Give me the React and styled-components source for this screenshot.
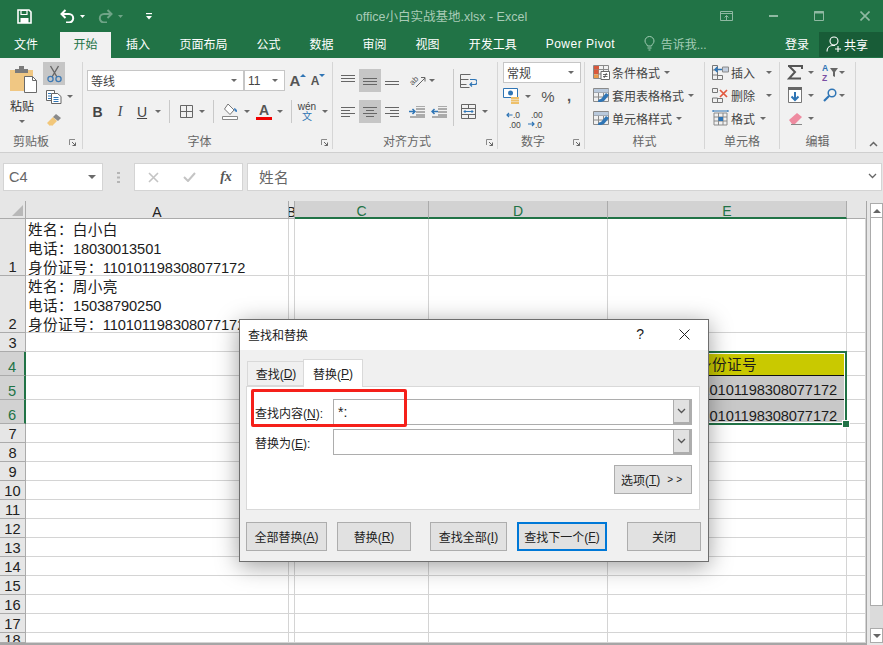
import React from "react";
import styled, { createGlobalStyle } from "styled-components";

const FONT = `"Liberation Sans", "Noto Sans CJK SC", sans-serif`;
const GREEN = "#217346";

const GlobalStyle = createGlobalStyle`
  html, body { margin: 0; padding: 0; background: #e6e6e6; }
  * { box-sizing: border-box; }
`;

const Page = styled.div`
  position: relative;
  width: 883px;
  height: 645px;
  overflow: hidden;
  display: flex;
  flex-direction: column;
  background: #e6e6e6;
  font-family: ${FONT};
  font-size: 12px;
  color: #444;
`;

/* ---------- title bar ---------- */
const TitleBar = styled.div`
  height: 32px;
  background: ${GREEN};
  display: grid;
  grid-template-columns: 1fr auto 1fr;
  align-items: center;
`;
const Qat = styled.div`
  display: flex;
  align-items: center;
  padding-left: 16px;
`;
const QatItem = styled.span`
  display: flex;
  justify-content: center;
  width: ${(p) => p.$w}px;
  margin-left: ${(p) => p.$ml || 0}px;
  opacity: ${(p) => p.$dim ? 0.35 : 1};
`;
const DocTitle = styled.div`
  color: #a9cbb7;
  font-size: 12.5px;
  padding-bottom: 1px;
`;
const WinButtons = styled.div`
  display: flex;
  justify-content: flex-end;
  align-items: center;
  padding-right: 13px;
  gap: 36px;
`;

/* ---------- tabs ---------- */
const TabBar = styled.div`
  height: 26px;
  background: ${GREEN};
  display: flex;
  align-items: stretch;
`;
const Tab = styled.div`
  padding: 0 ${(p) => p.$pad ?? 14.5}px 3px;
  margin-right: ${(p) => p.$mr || 0}px;
  display: flex;
  align-items: center;
  color: ${(p) => p.$active ? GREEN : "#fff"};
  background: ${(p) => p.$active ? "#f1f1f1" : "transparent"};
  letter-spacing: ${(p) => p.$wide ? "0.5px" : "0"};
  white-space: nowrap;
`;
const TellMe = styled.div`
  display: flex;
  align-items: center;
  gap: 6px;
  margin-left: 14px;
  color: #a4cdb6;
  padding-bottom: 3px;
`;
const TabSpacer = styled.div`flex: 1;`;
const SignIn = styled.div`
  color: #fff;
  display: flex;
  align-items: center;
  padding: 0 10px 3px 0;
`;
const Share = styled.div`
  width: 64px;
  height: 25px;
  background: #185c37;
  color: #fff;
  display: flex;
  align-items: center;
  padding-left: 7px;
  gap: 2px;
`;

/* ---------- ribbon ---------- */
const Ribbon = styled.div`
  height: 95px;
  background: #f1f1f1;
  border-bottom: 1px solid #cfcfcf;
  padding: 4px 0 3px;
  display: flex;
  position: relative;
`;
const Group = styled.div`
  width: ${(p) => p.$w}px;
  border-right: 1px solid #d6d6d6;
  display: flex;
  flex-direction: column;
`;
const GroupBody = styled.div`
  flex: 1;
  display: flex;
  flex-direction: ${(p) => p.$col ? "column" : "row"};
  gap: ${(p) => p.$gap || 0}px;
  padding: ${(p) => p.$top || 0}px 0 0 ${(p) => p.$left || 0}px;
  min-height: 0;
`;
const GroupFooter = styled.div`
  height: 14px;
  display: flex;
  align-items: center;
`;
const GroupLabel = styled.div`
  flex: 1;
  text-align: center;
  color: #666;
  line-height: 14px;
`;
const LauncherBox = styled.div`
  width: ${(p) => p.$w || 16}px;
  display: flex;
  justify-content: center;
`;
const Row = styled.div`
  display: flex;
  align-items: center;
  height: ${(p) => p.$h || 23}px;
  margin-left: ${(p) => p.$ml || 0}px;
  margin-top: ${(p) => p.$mt || 0}px;
`;
const Tool = styled.div`
  width: ${(p) => p.$w || 22}px;
  height: ${(p) => p.$h || 23}px;
  margin-left: ${(p) => p.$ml || 0}px;
  display: flex;
  align-items: center;
  justify-content: center;
  flex: none;
  background: ${(p) => p.$on ? "#c6c6c6" : "transparent"};
`;
const Caret = styled.span`
  display: inline-block;
  width: 0;
  height: 0;
  flex: none;
  border-left: 3px solid transparent;
  border-right: 3px solid transparent;
  border-top: 3px solid #6a6a6a;
  margin-left: ${(p) => p.$ml || 0}px;
`;
const BigCaret = styled(Caret)`
  border-left-width: 4px;
  border-right-width: 4px;
  border-top-width: 4px;
`;
const SizeCaret = styled(Caret)`
  border-top-color: #2f75b5;
  margin-bottom: 10px;
  transform: ${(p) => p.$up ? "rotate(180deg)" : "none"};
`;
const CaretBox = styled.div`
  width: ${(p) => p.$w || 10}px;
  margin-left: ${(p) => p.$ml || 0}px;
  display: flex;
  justify-content: center;
  flex: none;
`;
const Sep = styled.div`
  width: 1px;
  height: ${(p) => p.$h || 23}px;
  background: #c9c9c9;
  margin: 0 ${(p) => p.$m ?? 6}px;
  flex: none;
`;
const Combo = styled.div`
  width: ${(p) => p.$w}px;
  height: 21px;
  background: #fff;
  border: 1px solid #c6c6c6;
  display: flex;
  align-items: center;
  justify-content: space-between;
  padding: 0 6px 0 3px;
  color: #444;
  flex: none;
`;
const FormatLetter = styled.span`
  font-size: 14px;
  color: #444;
  font-weight: ${(p) => p.$bold ? 700 : 400};
  font-style: ${(p) => p.$italic ? "italic" : "normal"};
  font-family: ${(p) => p.$italic ? `"Liberation Serif", serif` : FONT};
  text-decoration: ${(p) => p.$under ? "underline" : "none"};
`;
const ColorA = styled.span`
  width: 16px;
  display: flex;
  justify-content: center;
  font-size: 14px;
  font-weight: 700;
  line-height: 14px;
  color: #555;
  border-bottom: 3px solid #f00000;
`;
const WenBox = styled.span`
  display: flex;
  flex-direction: column;
  align-items: center;
  line-height: 10px;
  font-size: 10px;
  color: #444;
`;
const WenChar = styled.span`
  color: #2f75b5;
  font-size: 10px;
`;
const SizeA = styled.span`
  display: flex;
  align-items: flex-start;
  font-size: ${(p) => p.$s}px;
  font-weight: 700;
  color: #555;
  line-height: 16px;
`;
const ListItem = styled.div`
  display: flex;
  align-items: center;
  height: 20px;
  color: #444;
  gap: 1px;
`;
const ItemIcon = styled.span`
  width: 19px;
  display: flex;
  justify-content: center;
  flex: none;
`;
const PasteColumn = styled.div`
  width: 43px;
  display: flex;
  flex-direction: column;
  align-items: flex-start;
  padding: 3px 0 0 10px;
`;
const PasteLabel = styled.div`
  margin-top: 4px;
  width: 24px;
  text-align: center;
  font-size: 12px;
  line-height: 18px;
  color: #333;
`;
const PasteCaret = styled.div`
  width: 24px;
  margin-top: 4px;
  display: flex;
  justify-content: center;
`;
const Percent = styled.span`
  font-size: 15px;
  color: #555;
`;
const Comma = styled.span`
  font-size: 15px;
  font-weight: 700;
  color: #555;
  line-height: 10px;
`;
const CollapseBox = styled.div`
  position: absolute;
  right: 5px;
  bottom: 5px;
  display: flex;
`;

/* ---------- formula bar ---------- */
const FormulaRow = styled.div`
  height: 48px;
  padding: 10px 1px 10px 3px;
  display: flex;
  flex: none;
`;
const NameBox = styled.div`
  width: 100px;
  background: #fff;
  border: 1px solid #d4d4d4;
  display: flex;
  align-items: center;
  justify-content: space-between;
  padding: 0 6px 0 5px;
  font-size: 14.5px;
  color: #666;
`;
const Dots = styled.div`
  width: 31px;
  display: flex;
  justify-content: center;
  align-items: center;
`;
const FuncBox = styled.div`
  width: 109px;
  background: #fff;
  border: 1px solid #d4d4d4;
  margin-right: 4px;
  display: grid;
  grid-template-columns: 36px 37px 36px;
  align-items: center;
  justify-items: center;
`;
const FxText = styled.span`
  font-family: "Liberation Serif", serif;
  font-style: italic;
  font-size: 14px;
  font-weight: 700;
  color: #555;
`;
const FormulaInput = styled.div`
  flex: 1;
  background: #fff;
  border: 1px solid #d4d4d4;
  display: flex;
  align-items: center;
  justify-content: space-between;
  padding: 0 4px 2px 11px;
  font-size: 14.67px;
  color: #666;
  letter-spacing: 0.3px;
`;

/* ---------- sheet ---------- */
const Sheet = styled.div`
  flex: 1;
  display: flex;
  min-height: 0;
  align-items: flex-start;
`;
const Grid = styled.div`
  display: grid;
  grid-template-columns: 26px 263px 6px 134px 179px 239px 19px;
  grid-template-rows: ${(p) => p.$rows};
  border-bottom: 2px solid #a6a6a6;
  border-right: 1px solid #a6a6a6;
  background: #fff;
  font-size: 14.67px;
  color: #1c1c1c;
`;
const Corner = styled.div`
  background: #e6e6e6;
  border-right: 1px solid #ababab;
  border-bottom: 1px solid #ababab;
  display: flex;
  align-items: flex-end;
  justify-content: flex-end;
  padding: 0 2px 2px 0;
`;
const CornerMark = styled.span`
  width: 0;
  height: 0;
  border-left: 11px solid transparent;
  border-bottom: 11px solid #b8b8b8;
`;
const ColHead = styled.div`
  background: ${(p) => p.$sel ? "#d2d2d2" : "#e6e6e6"};
  border-right: 1px solid ${(p) => p.$last ? "#e6e6e6" : "#ababab"};
  border-bottom: ${(p) => p.$sel ? `2px solid ${GREEN}` : "1px solid #ababab"};
  color: ${(p) => p.$sel ? GREEN : "#222"};
  display: flex;
  align-items: flex-end;
  justify-content: center;
  line-height: 12px;
  font-size: 14px;
  overflow: hidden;
`;
const RowHead = styled.div`
  background: ${(p) => p.$sel ? "#d2d2d2" : "#e6e6e6"};
  border-right: ${(p) => p.$sel ? `2px solid ${GREEN}` : "1px solid #ababab"};
  border-bottom: 1px solid #ababab;
  color: ${(p) => p.$sel ? GREEN : "#222"};
  display: flex;
  align-items: ${(p) => p.$clipped ? "flex-start" : "flex-end"};
  justify-content: center;
  line-height: 15px;
  overflow: hidden;
`;
const Cell = styled.div`
  background: ${(p) => p.$bg || "#fff"};
  border-right: 1px solid #d4d4d4;
  border-bottom: 1px solid ${(p) => p.$line || "#d4d4d4"};
  display: flex;
  flex-direction: column;
  justify-content: flex-end;
  align-items: ${(p) => p.$align || "flex-start"};
  padding: ${(p) => p.$pad || "0 0 0 2px"};
  line-height: 19px;
  white-space: nowrap;
  min-width: 0;
`;
const CellText = styled.div`
  letter-spacing: 0.3px;
  transform: translateY(${(p) => p.$dy || 0}px);
`;
const Num = styled.span`
  letter-spacing: -0.12px;
`;
const Selection = styled.div`
  position: absolute;
  left: 607px;
  top: 351px;
  width: 240px;
  height: 74px;
  border: 2px solid ${GREEN};
  box-shadow: inset 0 0 0 1px #fff;
  pointer-events: none;
`;
const Handle = styled.div`
  position: absolute;
  right: -4px;
  bottom: -4px;
  width: 6px;
  height: 6px;
  background: ${GREEN};
  outline: 1px solid #fff;
`;
const ScrollBar = styled.div`
  width: 13px;
  height: 440px;
  margin: 2px 0 0 3px;
  display: flex;
  flex-direction: column;
`;
const ScrollBtn = styled.div`
  height: 15px;
  background: #fff;
  border: 1px solid #ababab;
  display: flex;
  align-items: center;
  justify-content: center;
  flex: none;
`;
const ScrollThumb = styled.div`
  height: 388px;
  background: #fff;
  border: 1px solid #ababab;
  border-top: 0;
  flex: none;
`;
const ScrollTrack = styled.div`
  flex: 1;
  background: #dbdbdb;
`;
const TriUp = styled.span`
  width: 0;
  height: 0;
  border-left: 4px solid transparent;
  border-right: 4px solid transparent;
  border-bottom: 4px solid #666;
`;
const TriDown = styled(TriUp)`
  border-bottom: 0;
  border-top: 4px solid #666;
`;

/* ---------- dialog ---------- */
const Dialog = styled.div`
  position: absolute;
  left: 239px;
  top: 319px;
  width: 470px;
  height: 243px;
  background: #f0f0f0;
  border: 1px solid #6e6e6e;
  box-shadow: 0 4px 22px rgba(0, 0, 0, 0.38);
  color: #222;
  font-size: 12px;
`;
const DialogTitle = styled.div`
  height: 30px;
  background: #fff;
  display: flex;
  align-items: center;
  justify-content: space-between;
  padding: 0 18px 2px 8px;
  color: #1a1a1a;
`;
const DialogActions = styled.div`
  display: flex;
  align-items: center;
  gap: 35px;
  font-size: 14px;
`;
const DialogTabs = styled.div`
  display: flex;
  align-items: flex-end;
  height: 36px;
  margin-left: 7px;
  position: relative;
  z-index: 1;
`;
const DialogTab = styled.div`
  width: ${(p) => p.$w}px;
  height: ${(p) => p.$active ? 28 : 25}px;
  background: ${(p) => p.$active ? "#fff" : "#f0f0f0"};
  border: 1px solid #d9d9d9;
  border-bottom: ${(p) => p.$active ? "0" : "1px solid #d9d9d9"};
  border-right: ${(p) => p.$active ? "1px solid #d9d9d9" : "0"};
  display: flex;
  align-items: center;
  justify-content: center;
  padding-left: ${(p) => p.$active ? 0 : 1}px;
  margin-top: auto;
  margin-bottom: ${(p) => p.$active ? "-1px" : "0"};
`;
const Panel = styled.div`
  position: relative;
  width: 454px;
  height: 124px;
  margin: 0 0 0 6px;
  background: #fff;
  border: 1px solid #d9d9d9;
  padding: 12px 7px 0 8px;
`;
const FieldRow = styled.div`
  display: flex;
  align-items: center;
  height: 26px;
  margin-bottom: 4px;
`;
const FieldLabel = styled.div`
  width: 78px;
  flex: none;
`;
const FieldInput = styled.div`
  flex: 1;
  height: 26px;
  border: 1px solid #adadad;
  background: #fff;
  display: flex;
  align-items: center;
  justify-content: space-between;
  padding-left: 4px;
  font-size: 14px;
  color: #222;
`;
const FieldDrop = styled.div`
  width: 18px;
  height: 24px;
  background: #e1e1e1;
  border: 1px solid #adadad;
  border-width: 0 2px 2px 1px;
  display: flex;
  align-items: center;
  justify-content: center;
`;
const OptionsRow = styled.div`
  display: flex;
  justify-content: flex-end;
  margin: 10px 0 0 0;
`;
const DialogButton = styled.div`
  width: ${(p) => p.$w}px;
  height: ${(p) => p.$h || 29}px;
  margin-left: ${(p) => p.$ml || 0}px;
  background: #e1e1e1;
  border: ${(p) => p.$primary ? "2px solid #0078d7" : "1px solid #adadad"};
  display: flex;
  align-items: center;
  justify-content: center;
  flex: none;
  color: #222;
  white-space: nowrap;
`;
const ButtonRow = styled.div`
  display: flex;
  padding: 12px 0 0 6px;
`;
const Mn = styled.span`
  text-decoration: underline;
`;
const RedMark = styled.div`
  position: absolute;
  left: 11px;
  top: 69px;
  width: 156px;
  height: 38px;
  border: 3px solid #f5201a;
  border-radius: 2px;
  pointer-events: none;
`;
const MoreArrows = styled.span`
  margin-left: 7px;
  letter-spacing: 3px;
  font-size: 10px;
`;

/* ---------- icons ---------- */
const Svg = ({ w, h = w, children }) => (
  <svg width={w} height={h} viewBox={`0 0 ${w} ${h}`} fill="none" style={{ display: "block", flex: "none" }}>
    {children}
  </svg>
);

const SaveIcon = () => (
  <Svg w={15} h={15}>
    <path d="M1 1h11l2 2v11H1z" stroke="#fff" strokeWidth="1.6" />
    <path d="M4 1.5h6v4H4z" stroke="#fff" strokeWidth="1.2" />
    <path d="M3.5 9h8v5h-8z" fill="#fff" />
  </Svg>
);
const UndoIcon = ({ flip }) => (
  <Svg w={15} h={14}>
    <g transform={flip ? "translate(15 0) scale(-1 1)" : undefined}>
      <path d="M2 5h7a4.2 4.2 0 0 1 0 8.4H6" stroke="#fff" strokeWidth="2" />
      <path d="M5.5 1 1.5 5l4 4" stroke="#fff" strokeWidth="2" />
    </g>
  </Svg>
);
const WhiteCaret = () => (
  <Svg w={5} h={3}><path d="M0 0h5L2.5 3z" fill="#fff" /></Svg>
);
const QatMore = () => (
  <Svg w={6} h={7}>
    <path d="M0 0h6v1.2H0z" fill="#fff" />
    <path d="M0 3h6L3 6.5z" fill="#fff" />
  </Svg>
);
const DisplayIcon = () => (
  <Svg w={13} h={10}>
    <path d="M.5.5h12v9H.5z" stroke="#8fb9a2" />
    <path d="M.5 2.5h12" stroke="#8fb9a2" />
    <path d="M6.5 9V4.5M4.5 6.5l2-2 2 2" stroke="#8fb9a2" />
  </Svg>
);
const MinIcon = () => <Svg w={9} h={3}><path d="M0 1h9" stroke="#8fb9a2" strokeWidth="2" /></Svg>;
const MaxIcon = () => (
  <Svg w={10} h={10}>
    <path d="M.5.5h9v9h-9z" stroke="#8fb9a2" />
    <path d="M0 1.5h10" stroke="#8fb9a2" strokeWidth="2" />
  </Svg>
);
const CloseIcon = () => <Svg w={10} h={10}><path d="m.5.5 9 9m0-9-9 9" stroke="#8fb9a2" strokeWidth="1.6" /></Svg>;
const BulbIcon = () => (
  <Svg w={11} h={15}>
    <path d="M3.5 10C3 8 1 7.5 1 5a4.5 4.5 0 0 1 9 0c0 2.5-2 3-2.5 5z" stroke="#a4cdb6" />
    <path d="M3.5 12h4M4.5 14h2" stroke="#a4cdb6" />
  </Svg>
);
const ShareIcon = () => (
  <Svg w={16} h={17}>
    <circle cx="8" cy="5" r="4" stroke="#fff" strokeWidth="1.1" />
    <path d="M1 15.5c0-3.5 2.5-6 6-6h2" stroke="#fff" strokeWidth="1.1" />
    <path d="M12 10v6M9 13h6" stroke="#fff" strokeWidth="1.1" />
  </Svg>
);

const PasteIcon = () => (
  <Svg w={28} h={29}>
    <path d="M0 5h23v21H0z" fill="#f0c783" />
    <path d="M5 4h13v4H5z" fill="#7b7b7b" />
    <path d="M9 1h5v4H9z" fill="#7b7b7b" />
    <path d="M14.5 11.5h8l4 4v12h-12z" fill="#fff" stroke="#6a6a6a" />
    <path d="M22.5 11.5v4h4" stroke="#6a6a6a" />
  </Svg>
);
const CutIcon = () => (
  <Svg w={15} h={18}>
    <path d="M11.5 1 5 12M3.5 1 10 12" stroke="#666" strokeWidth="1.4" />
    <circle cx="3.5" cy="14" r="2.6" stroke="#3d79b4" strokeWidth="1.3" />
    <circle cx="11.5" cy="14" r="2.6" stroke="#3d79b4" strokeWidth="1.3" />
  </Svg>
);
const CopyIcon = () => (
  <Svg w={16} h={14}>
    <path d="M.5.5h8v3h3v7H.5z" fill="#fff" stroke="#666" />
    <path d="M5.5 3.5h6l3.5 3v7H5.5z" fill="#fff" stroke="#666" />
    <path d="M2 3.5h3M2 6h3M2 8.5h3M7.5 7.5h5M7.5 9.5h5M7.5 11.5h5" stroke="#2f75b5" />
  </Svg>
);
const PainterIcon = () => (
  <Svg w={17} h={14}>
    <path d="m1 10 6-6 4 4-5 5-1-1-1 1z" fill="#f2c77a" />
    <path d="m7 4 3-3 5 4-3 3z" fill="#8a8a8a" />
  </Svg>
);
const Launcher = () => (
  <Svg w={7} h={7}>
    <path d="M.5 6V.5H6" stroke="#8a8a8a" />
    <path d="M3 3l3.5 3.5M6.5 3.5v3h-3" stroke="#666" />
  </Svg>
);
const BorderIcon = () => (
  <Svg w={13} h={13}>
    <path d="M.5.5h12v12H.5zM6.5.5v12M.5 6.5h12" stroke="#666" />
  </Svg>
);
const FillIcon = () => (
  <Svg w={17} h={17}>
    <path d="m6 1 6 6-4 4.5L2.5 6z" fill="#fff" stroke="#777" />
    <path d="M12 5c2 .5 3.5 2 3 4-1.5 0-3-1-3-4z" fill="#3f80c0" />
    <path d="M.5 13.5h15v3H.5z" fill="#fff" stroke="#888" />
  </Svg>
);
const Lines = ({ rows, w = 14, h = 12 }) => (
  <Svg w={w} h={h}>
    {rows.map(([x1, x2, y, c], i) => (
      <path key={i} d={`M${x1} ${y}.5H${x2}`} stroke={c || "#666"} />
    ))}
  </Svg>
);
const lns = (off) => [[0, 14, off], [0, 14, off + 3], [0, 14, off + 6]];
const OrientIcon = () => (
  <Svg w={17} h={16}>
    <text x="0" y="10" fontSize="8" fill="#555" fontFamily="Liberation Sans" transform="rotate(-45 5 7)">ab</text>
    <path d="m7 14 9-9M12 4.5h4v4" stroke="#666" />
  </Svg>
);
const IndentIcon = ({ flip }) => (
  <Svg w={16} h={12}>
    <path d="M7 .5h9M7 3.5h9M7 6.5h9M7 9.5h9M1 11.5h15" stroke="#666" transform="translate(0 -.5)" />
    <g transform={flip ? "" : "translate(7 0) scale(-1 1)"}>
      <path d="M7 5.5H1M3.5 3 1 5.5 3.5 8" stroke="#2f75b5" strokeWidth="1.5" />
    </g>
  </Svg>
);
const WrapIcon = () => (
  <Svg w={17} h={16}>
    <path d="M.5 1.5h10M.5 6.5h8M.5 11.5h6" stroke="#666" />
    <path d="M.5 1.5v13h9" stroke="#666" />
    <path d="M10 6.5h4.5a2 2 0 0 1 0 5H10M12 9.5l-2 2 2 2" stroke="#2f75b5" strokeWidth="1.2" />
  </Svg>
);
const MergeIcon = () => (
  <Svg w={15} h={15}>
    <path d="M.5.5h14v14H.5zM.5 4.5h14M.5 10.5h14M7.5.5v4M7.5 10.5v4" stroke="#666" />
    <path d="M3 7.5h9M4.5 6 3 7.5 4.5 9M10.5 6 12 7.5 10.5 9" stroke="#2f75b5" />
  </Svg>
);
const CurrencyIcon = () => (
  <Svg w={17} h={16}>
    <path d="M.5.5h14v9H.5z" fill="#fff" stroke="#2f75b5" />
    <circle cx="7.5" cy="5" r="2.5" fill="#2f75b5" />
    <path d="M8 9h8v2H8zM8 11.5h8v2H8zM8 14h8v2H8z" fill="#eec06a" />
  </Svg>
);
const DecreaseIcon = () => (
  <Svg w={16} h={19}>
    <path d="M6.5 5H1M3 3 1 5l2 2" stroke="#2f75b5" strokeWidth="1.2" />
    <text x="7" y="8" fontSize="8.5" fill="#444" fontFamily="Liberation Sans">.0</text>
    <text x="3" y="17.5" fontSize="8.5" fill="#444" fontFamily="Liberation Sans">.00</text>
  </Svg>
);
const IncreaseIcon = () => (
  <Svg w={16} h={19}>
    <text x="3" y="8" fontSize="8.5" fill="#444" fontFamily="Liberation Sans">.00</text>
    <path d="M0 14h6M4 12l2 2-2 2" stroke="#2f75b5" strokeWidth="1.2" />
    <text x="7" y="17.5" fontSize="8.5" fill="#444" fontFamily="Liberation Sans">.0</text>
  </Svg>
);
const TableBase = ({ children }) => (
  <Svg w={17} h={15}>
    <path d="M.5.5h15v13H.5zM.5 4.5h15M.5 9h15M5.5.5v13M10.5.5v13" stroke="#8a8a8a" />
    {children}
  </Svg>
);
const CondIcon = () => (
  <TableBase>
    <path d="M1 1h5v3.5H1z" fill="#d9583b" />
    <path d="M1 5h4.5v4H1z" fill="#d9583b" />
    <path d="M1 9.5h4.5V13H1z" fill="#ed9b4b" />
    <path d="M8 6.5h8.500v8H8z" fill="#fff" stroke="#666" />
    <path d="M10 9.5h4.5M10 11.5h4.5M13.5 8 11 13" stroke="#444" strokeWidth=".8" />
  </TableBase>
);
const BrushTableIcon = () => (
  <TableBase>
    <path d="M1 1h14.5v3.5H1z" fill="#b9c9dc" />
    <path d="M5 14c0-2 1-3 3-3l5-6 3 2-5 6c-2 1-4 1-6 1z" fill="#2f75b5" />
  </TableBase>
);
const InsertIcon = () => (
  <Svg w={17} h={15}>
    <path d="M.5.5h5v14h-5zM.5 5h5M.5 10h5M5.5 10.5h5v4h-5z" stroke="#777" />
    <path d="M10.5 2h6v5h-6z" fill="#c3cede" stroke="#8a8a8a" />
    <path d="M10 4.5H3M5.5 2 3 4.5 5.5 7" stroke="#2f75b5" strokeWidth="1.5" />
  </Svg>
);
const DeleteIcon = () => (
  <Svg w={17} h={15}>
    <path d="M.5.5h5v4h-5zM.5 10h5v4.500h-5zM5.5 10.5h5v4h-5z" stroke="#777" />
    <path d="m8 2 7 7m0-7-7 7" stroke="#e2583e" strokeWidth="1.7" />
  </Svg>
);
const FormatIcon = () => (
  <Svg w={17} h={16}>
    <path d="M2 3h13v12H2zM2 7h13M2 11h13M6.5 3v12M11 3v12" stroke="#8a8a8a" />
    <path d="M6.5 7H11v4H6.5z" fill="#2f75b5" />
    <path d="M1 1h15M1 0v2M16 0v2" stroke="#2f75b5" />
  </Svg>
);
const SigmaIcon = () => (
  <Svg w={16} h={15}>
    <path d="M1 1h14v3M14 13.5H2l6-6.5-6-6" stroke="#555" strokeWidth="2" />
  </Svg>
);
const SortIcon = () => (
  <Svg w={16} h={20}>
    <text x="0" y="9" fontSize="8.5" fontWeight="700" fill="#2f75b5" fontFamily="Liberation Sans">A</text>
    <text x="0" y="18.5" fontSize="8.5" fontWeight="700" fill="#7a4fa3" fontFamily="Liberation Sans">Z</text>
    <path d="M8 6h8l-3 4v5l-2-1v-4z" fill="#666" />
  </Svg>
);
const FillDownIcon = () => (
  <Svg w={14} h={16}>
    <path d="M.5.5h13v15H.5z" fill="#fff" stroke="#777" />
    <path d="M0 0h14v3H0z" fill="#666" />
    <path d="M7 5v8M3.5 9.5 7 13l3.5-3.5" stroke="#2f75b5" strokeWidth="2" />
  </Svg>
);
const FindIcon = () => (
  <Svg w={14} h={14}>
    <circle cx="9" cy="5" r="3.8" stroke="#2f75b5" strokeWidth="1.5" />
    <path d="M6 8 1 13" stroke="#2f75b5" strokeWidth="2.2" />
  </Svg>
);
const EraserIcon = () => (
  <Svg w={15} h={14}>
    <path d="m1 9 8-7 5 4-7 7H4z" fill="#ee8ba0" />
    <path d="M3 13.5h11" stroke="#888" />
  </Svg>
);
const ChevronUp = () => <Svg w={9} h={6}><path d="m1 5 3.5-3.5L8 5" stroke="#666" strokeWidth="1.5" /></Svg>;
const ChevronDown = ({ c = "#666", w = 9 }) => <Svg w={w} h={6}><path d={`m1 1 ${(w - 2) / 2} 3.5L${w - 1} 1`} stroke={c} strokeWidth="1.3" /></Svg>;
const DotsIcon = () => (
  <Svg w={3} h={11}>
    <path d="M0 0h3v2H0zM0 4.5h3v2H0zM0 9h3v2H0z" fill="#b5b5b5" />
  </Svg>
);
const CancelIcon = () => <Svg w={11} h={11}><path d="m1 1 9 9m0-9-9 9" stroke="#c4c4c4" strokeWidth="1.6" /></Svg>;
const CheckIcon = () => <Svg w={13} h={10}><path d="m1 5 4 4 7-8" stroke="#c4c4c4" strokeWidth="2" /></Svg>;
const DialogClose = () => <Svg w={11} h={11}><path d="m.5.5 10 10m0-10-10 10" stroke="#222" /></Svg>;

/* ---------- data ---------- */
const TABS = ["页面布局", "公式", "数据", "审阅", "视图", "开发工具"];
const COLS = ["A", "B", "C", "D", "E", ""];
const ROW_HEIGHTS = [57, 57, 19, 24, 24, 24, 19, 19, 19, 19, 19, 19, 19, 19, 19, 19, 19, 10];
const CELLS = {
  "A1": [["姓名：白小白"], ["电话：", "18030013501"], ["身份证号：", "110101198308077172"]],
  "A2": [["姓名：周小亮"], ["电话：", "15038790250"], ["身份证号：", "110101198308077172"]],
};
const STYLE_ITEMS = [
  [CondIcon, "条件格式"],
  [BrushTableIcon, "套用表格格式"],
  [BrushTableIcon, "单元格样式"],
];
const CELL_ITEMS = [
  [InsertIcon, "插入", 12],
  [DeleteIcon, "删除", 12],
  [FormatIcon, "格式", 6],
];

const gridCell = (col, row) => {
  const key = `${col}${row}`;
  if (CELLS[key]) {
    return (
      <Cell key={key}>
        {CELLS[key].map(([label, num], i) => (
          <CellText key={i} $dy={3}>{label}{num && <Num>{num}</Num>}</CellText>
        ))}
      </Cell>
    );
  }
  if (key === "E4") return <Cell key={key} $bg="#c9c900" $line="#111" $align="center" $pad="0"><CellText>身份证号</CellText></Cell>;
  if (key === "E5" || key === "E6") {
    return (
      <Cell key={key} $bg="#c8c8c8" $line="#111" $align="flex-end" $pad="0 9px 0 0">
        <CellText $dy={key === "E5" ? 1 : 3}><Num>110101198308077172</Num></CellText>
      </Cell>
    );
  }
  return <Cell key={key} />;
};

export default function App() {
  return (
    <Page>
      <GlobalStyle />
      <TitleBar>
        <Qat>
          <QatItem $w={17}><SaveIcon /></QatItem>
          <QatItem $w={16} $ml={26}><UndoIcon /></QatItem>
          <QatItem $w={8} $ml={3}><WhiteCaret /></QatItem>
          <QatItem $w={16} $ml={11} $dim><UndoIcon flip /></QatItem>
          <QatItem $w={8} $ml={3} $dim><WhiteCaret /></QatItem>
          <QatItem $w={8} $ml={21}><QatMore /></QatItem>
        </Qat>
        <DocTitle>office小白实战基地.xlsx - Excel</DocTitle>
        <WinButtons>
          <DisplayIcon />
          <MinIcon />
          <MaxIcon />
          <CloseIcon />
        </WinButtons>
      </TitleBar>

      <TabBar>
        <Tab $pad={14} $mr={8}>文件</Tab>
        <Tab $active $pad={13.5}>开始</Tab>
        <Tab $pad={15}>插入</Tab>
        {TABS.map((t) => <Tab key={t}>{t}</Tab>)}
        <Tab $wide>Power Pivot</Tab>
        <TellMe><BulbIcon />告诉我...</TellMe>
        <TabSpacer />
        <SignIn>登录</SignIn>
        <Share><ShareIcon />共享</Share>
      </TabBar>

      <Ribbon>
        <Group $w={83}>
          <GroupBody>
            <PasteColumn>
              <PasteIcon />
              <PasteLabel>粘贴</PasteLabel>
              <PasteCaret><Caret /></PasteCaret>
            </PasteColumn>
            <div>
              <Tool $on><CutIcon /></Tool>
              <Row><Tool><CopyIcon /></Tool><Caret $ml={2} /></Row>
              <Row><Tool><PainterIcon /></Tool></Row>
            </div>
          </GroupBody>
          <GroupFooter>
            <GroupLabel>剪贴板</GroupLabel>
            <LauncherBox $w={20}><Launcher /></LauncherBox>
          </GroupFooter>
        </Group>

        <Group $w={250}>
          <GroupBody $col $top={7} $gap={8} $left={4}>
            <Row>
              <Combo $w={157}>等线<Caret /></Combo>
              <Combo $w={41}>11<Caret /></Combo>
              <Tool $ml={3} $w={20}><SizeA $s={15}>A</SizeA><SizeCaret $up /></Tool>
              <Tool $w={20}><SizeA $s={12}>A</SizeA><SizeCaret /></Tool>
            </Row>
            <Row>
              <Tool $w={21}><FormatLetter $bold>B</FormatLetter></Tool>
              <Tool $ml={1}><FormatLetter $italic>I</FormatLetter></Tool>
              <Tool><FormatLetter $under>U</FormatLetter></Tool>
              <CaretBox><Caret /></CaretBox>
              <Sep />
              <Tool $w={21}><BorderIcon /></Tool>
              <CaretBox><Caret /></CaretBox>
              <Sep />
              <Tool $w={20}><FillIcon /></Tool>
              <CaretBox $ml={2}><Caret /></CaretBox>
              <Tool $w={20} $ml={2}><ColorA>A</ColorA></Tool>
              <CaretBox $ml={1}><Caret /></CaretBox>
              <Sep />
              <Tool $w={18}><WenBox>wén<WenChar>文</WenChar></WenBox></Tool>
              <CaretBox $ml={4}><Caret /></CaretBox>
            </Row>
          </GroupBody>
          <GroupFooter>
            <GroupLabel>字体</GroupLabel>
            <LauncherBox><Launcher /></LauncherBox>
          </GroupFooter>
        </Group>

        <Group $w={165}>
          <GroupBody $top={7} $left={4}>
            <div>
              <Row>
                <Tool><Lines rows={lns(0)} /></Tool>
                <Tool $on><Lines rows={lns(3)} /></Tool>
                <Tool><Lines rows={lns(6)} /></Tool>
                <Tool $ml={3}><OrientIcon /></Tool>
                <CaretBox $w={8}><Caret /></CaretBox>
              </Row>
              <Row $mt={8}>
                <Tool><Lines rows={[[0, 14, 1], [0, 9, 4], [0, 14, 7], [0, 9, 10]]} /></Tool>
                <Tool $on><Lines rows={[[0, 14, 1], [3, 11, 4], [0, 14, 7], [3, 11, 10]]} /></Tool>
                <Tool><Lines rows={[[0, 14, 1], [5, 14, 4], [0, 14, 7], [5, 14, 10]]} /></Tool>
                <Tool $ml={3}><IndentIcon /></Tool>
                <Tool><IndentIcon flip /></Tool>
              </Row>
            </div>
            <Sep $h={57} $m={3} />
            <div>
              <Row><Tool><WrapIcon /></Tool></Row>
              <Row $mt={8}><Tool><MergeIcon /></Tool><Caret $ml={3} /></Row>
            </div>
          </GroupBody>
          <GroupFooter>
            <GroupLabel>对齐方式</GroupLabel>
            <LauncherBox><Launcher /></LauncherBox>
          </GroupFooter>
        </Group>

        <Group $w={87}>
          <GroupBody $col $gap={3} $left={5}>
            <Combo $w={78}>常规<Caret /></Combo>
            <Row $h={20}>
              <CurrencyIcon />
              <Caret $ml={5} />
              <Tool $w={20} $h={20} $ml={7}><Percent>%</Percent></Tool>
              <Tool $w={20} $h={20} $ml={1}><Comma>,</Comma></Tool>
            </Row>
            <Row $h={20} $ml={3}>
              <Tool $w={16} $h={20}><DecreaseIcon /></Tool>
              <Tool $w={16} $h={20} $ml={6}><IncreaseIcon /></Tool>
            </Row>
          </GroupBody>
          <GroupFooter>
            <GroupLabel>数字</GroupLabel>
            <LauncherBox><Launcher /></LauncherBox>
          </GroupFooter>
        </Group>

        <Group $w={120}>
          <GroupBody $col $gap={3} $left={7}>
            {STYLE_ITEMS.map(([Icon, label]) => (
              <ListItem key={label}>
                <ItemIcon><Icon /></ItemIcon>{label}<Caret $ml={3} />
              </ListItem>
            ))}
          </GroupBody>
          <GroupFooter><GroupLabel>样式</GroupLabel></GroupFooter>
        </Group>

        <Group $w={75}>
          <GroupBody $col $gap={3} $left={6}>
            {CELL_ITEMS.map(([Icon, label, gap]) => (
              <ListItem key={label}>
                <ItemIcon><Icon /></ItemIcon>{label}<Caret $ml={gap - 2} />
              </ListItem>
            ))}
          </GroupBody>
          <GroupFooter><GroupLabel>单元格</GroupLabel></GroupFooter>
        </Group>

        <Group $w={76}>
          <GroupBody $col $gap={3} $left={7}>
            <Row $h={20}>
              <Tool $w={16} $h={20}><SigmaIcon /></Tool>
              <CaretBox $w={10} $ml={3}><Caret /></CaretBox>
              <Tool $w={17} $h={20} $ml={5}><SortIcon /></Tool>
              <CaretBox $w={8}><Caret /></CaretBox>
            </Row>
            <Row $h={20}>
              <Tool $w={16} $h={20}><FillDownIcon /></Tool>
              <CaretBox $w={10} $ml={3}><Caret /></CaretBox>
              <Tool $w={17} $h={20} $ml={5}><FindIcon /></Tool>
              <CaretBox $w={8}><Caret /></CaretBox>
            </Row>
            <Row $h={20}>
              <Tool $w={16} $h={20}><EraserIcon /></Tool>
              <CaretBox $w={10} $ml={3}><Caret /></CaretBox>
            </Row>
          </GroupBody>
          <GroupFooter><GroupLabel>编辑</GroupLabel></GroupFooter>
        </Group>
        <CollapseBox><ChevronUp /></CollapseBox>
      </Ribbon>

      <FormulaRow>
        <NameBox>C4<BigCaret /></NameBox>
        <Dots><DotsIcon /></Dots>
        <FuncBox>
          <CancelIcon />
          <CheckIcon />
          <FxText>fx</FxText>
        </FuncBox>
        <FormulaInput>姓名<ChevronDown /></FormulaInput>
      </FormulaRow>

      <Sheet>
        <Grid $rows={`18px ${ROW_HEIGHTS.map((h) => `${h}px`).join(" ")}`}>
          <Corner><CornerMark /></Corner>
          {COLS.map((c, i) => (
            <ColHead key={c || "F"} $sel={i >= 2 && i <= 4} $last={i === 5}>{c}</ColHead>
          ))}
          {ROW_HEIGHTS.map((_, r) => {
            const row = r + 1;
            return (
              <React.Fragment key={row}>
                <RowHead $sel={row >= 4 && row <= 6} $clipped={row === 18}>{row}</RowHead>
                {COLS.map((c) => gridCell(c || "F", row))}
              </React.Fragment>
            );
          })}
        </Grid>
        <ScrollBar>
          <ScrollBtn><TriUp /></ScrollBtn>
          <ScrollThumb />
          <ScrollTrack />
          <ScrollBtn><TriDown /></ScrollBtn>
        </ScrollBar>
      </Sheet>

      <Selection><Handle /></Selection>

      <Dialog>
        <DialogTitle>
          查找和替换
          <DialogActions>?<DialogClose /></DialogActions>
        </DialogTitle>
        <DialogTabs>
          <DialogTab $w={56}>查找(<Mn>D</Mn>)</DialogTab>
          <DialogTab $w={60} $active>替换(<Mn>P</Mn>)</DialogTab>
        </DialogTabs>
        <Panel>
          <FieldRow>
            <FieldLabel>查找内容(<Mn>N</Mn>):</FieldLabel>
            <FieldInput>*:<FieldDrop><ChevronDown c="#555" /></FieldDrop></FieldInput>
          </FieldRow>
          <FieldRow>
            <FieldLabel>替换为(<Mn>E</Mn>):</FieldLabel>
            <FieldInput><span /><FieldDrop><ChevronDown c="#555" /></FieldDrop></FieldInput>
          </FieldRow>
          <OptionsRow>
            <DialogButton $w={78}>选项(<Mn>T</Mn>)<MoreArrows>&gt;&gt;</MoreArrows></DialogButton>
          </OptionsRow>
        </Panel>
        <ButtonRow>
          <DialogButton $w={81}>全部替换(<Mn>A</Mn>)</DialogButton>
          <DialogButton $w={74} $ml={10}>替换(<Mn>R</Mn>)</DialogButton>
          <DialogButton $w={77} $ml={19}>查找全部(<Mn>I</Mn>)</DialogButton>
          <DialogButton $w={90} $ml={10} $primary>查找下一个(<Mn>F</Mn>)</DialogButton>
          <DialogButton $w={74} $ml={20}>关闭</DialogButton>
        </ButtonRow>
        <RedMark />
      </Dialog>
    </Page>
  );
}
